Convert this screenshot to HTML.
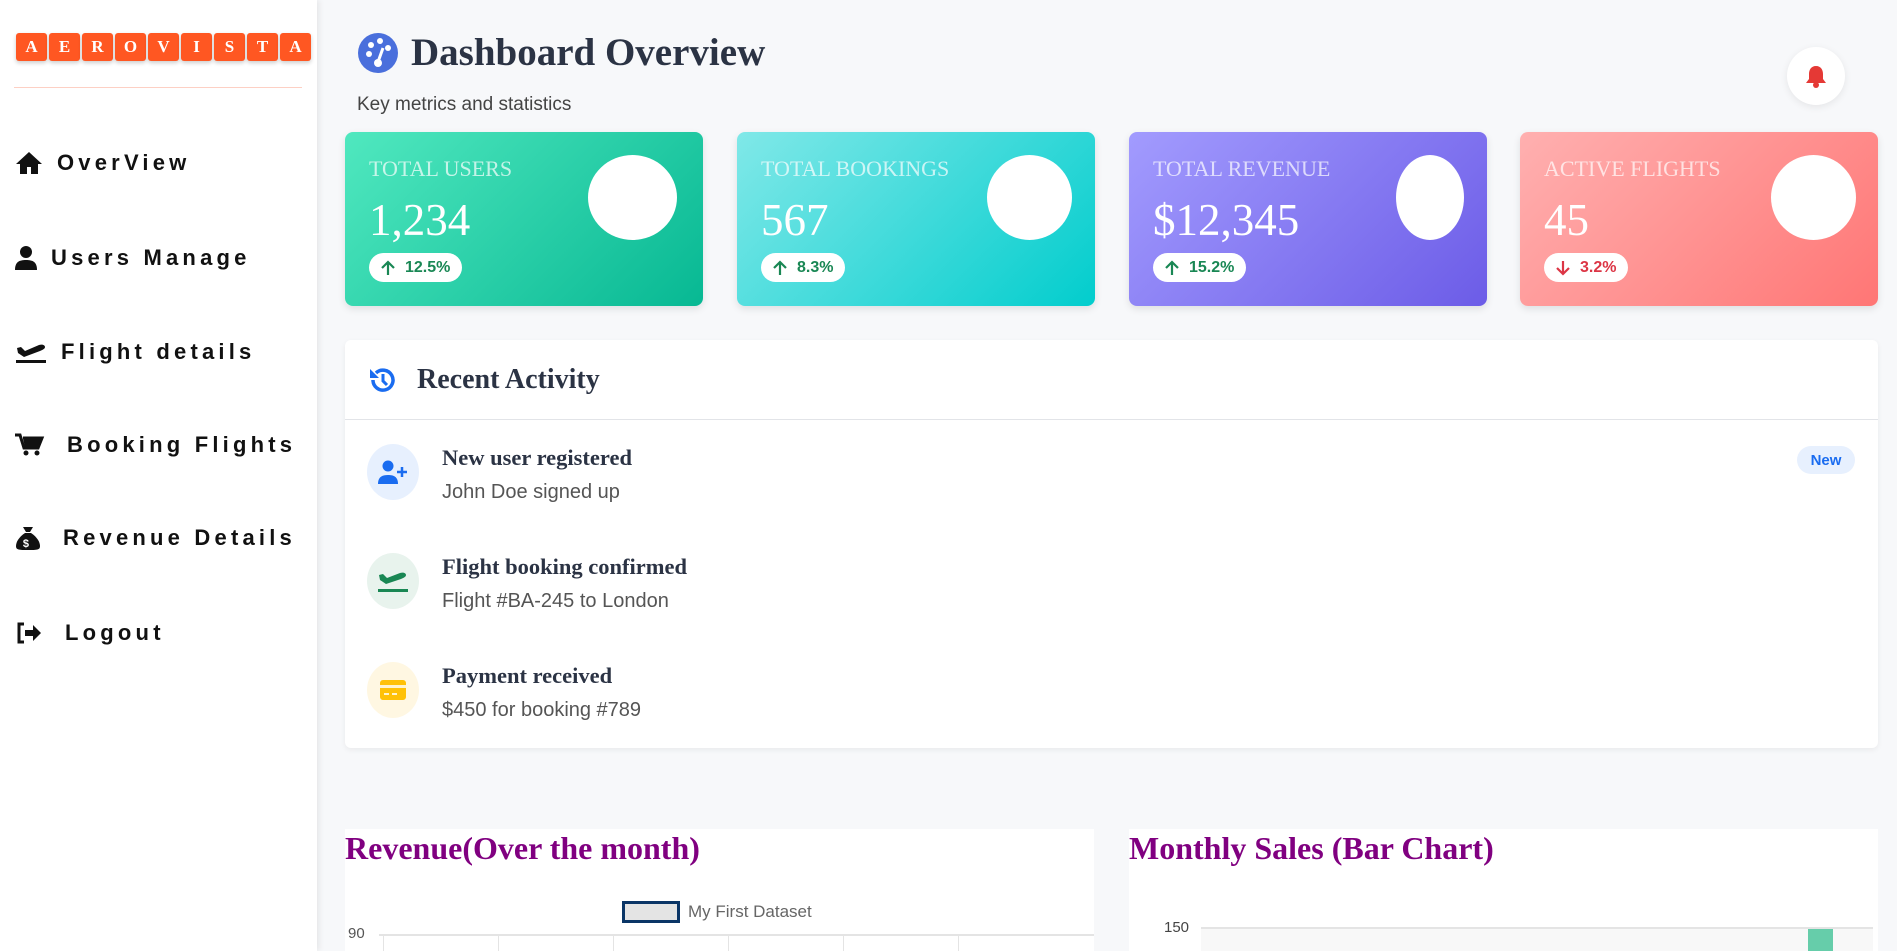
<!DOCTYPE html>
<html><head><meta charset="utf-8"><style>
*{box-sizing:border-box;margin:0;padding:0}
html{overflow:hidden;height:951px}
body{width:1897px;height:951px;overflow:hidden;background:#f7f8fa;font-family:"Liberation Sans",sans-serif;position:relative}
.side{position:absolute;left:0;top:0;width:317px;height:951px;background:#fff;box-shadow:2px 0 6px rgba(0,0,0,.08)}
.logo{position:absolute;left:16px;top:33px;display:flex;gap:2px}
.logo span{width:31px;height:28px;background:#ff5722;color:#fff;font-family:"Liberation Serif",serif;font-weight:bold;font-size:17px;display:flex;align-items:center;justify-content:center;border-radius:3px;box-shadow:0 2px 4px rgba(0,0,0,.2)}
.div{position:absolute;left:14px;top:87px;width:288px;height:1px;background:#fdd0c4}
.nav{position:absolute;left:15px;display:flex;align-items:center;font-weight:bold;font-size:22px;letter-spacing:4.2px;color:#111}
.nav svg{margin-right:14px}
.main{position:absolute;left:317px;top:0;right:0;height:951px}
.h1{position:absolute;left:40px;top:30px;display:flex;align-items:center;font-family:"Liberation Serif",serif;font-weight:bold;font-size:39px;color:#2b3344}
.sub{position:absolute;left:40px;top:94px;font-size:19px;color:#444}
.bell{position:absolute;left:1470px;top:47px;width:58px;height:58px;border-radius:50%;background:#fff;box-shadow:0 2px 8px rgba(0,0,0,.08);display:flex;align-items:center;justify-content:center}
.card{position:absolute;top:132px;width:358px;height:174px;border-radius:8px;color:#fff;box-shadow:0 3px 8px rgba(0,0,0,.1)}
.card .l{position:absolute;left:24px;top:24px;font-family:"Liberation Serif",serif;font-size:22px;opacity:.7}
.card .v{position:absolute;left:24px;top:62px;font-family:"Liberation Serif",serif;font-size:45px}
.card .b{position:absolute;left:24px;top:121px;height:29px;padding:0 12px;background:#fff;border-radius:15px;font-size:16px;font-weight:bold;display:flex;align-items:center;gap:10px}
.card .c{position:absolute;background:#fff;border-radius:50%}
.ra{position:absolute;left:28px;top:340px;width:1533px;height:408px;background:#fff;border-radius:6px;box-shadow:0 2px 6px rgba(0,0,0,.06)}
.ra .hd{height:80px;border-bottom:1px solid #e2e4e8;display:flex;align-items:center;padding-left:22px;font-family:"Liberation Serif",serif;font-weight:bold;font-size:28px;color:#2b3344}
.it{position:absolute;left:22px}
.it .ic{position:absolute;left:0;top:0;width:52px;height:56px;border-radius:50%;display:flex;align-items:center;justify-content:center}
.it .t{position:absolute;left:75px;top:1px;white-space:nowrap;font-family:"Liberation Serif",serif;font-weight:bold;font-size:22.5px;color:#2b3344}
.it .s{position:absolute;left:75px;top:37px;white-space:nowrap;font-size:20px;color:#555}
.ch{position:absolute;top:829px;width:749px;height:122px;background:#fff;overflow:hidden}
.ch h2{font-family:"Liberation Serif",serif;font-weight:bold;font-size:32px;color:#800080;line-height:38px}
</style></head><body>
<div class="side">
<div class="logo"><span>A</span><span>E</span><span>R</span><span>O</span><span>V</span><span>I</span><span>S</span><span>T</span><span>A</span></div>
<div class="div"></div>
<div class="nav" style="top:150px"><svg width="28" height="24" viewBox="0 0 28 24"><path d="M14 1L1 13h4v10h7v-7h4v7h7V13h4z" fill="#111"/></svg>OverView</div>
<div class="nav" style="top:245px"><svg width="22" height="24" viewBox="0 0 22 24"><circle cx="11" cy="6" r="6" fill="#111"/><path d="M0 24c0-8 4-10 11-10s11 2 11 10z" fill="#111"/></svg>Users Manage</div>
<div class="nav" style="top:339px"><svg width="32" height="24" viewBox="0 0 32 24"><path d="M2 8l4-1 4 4 14-6c3-1 6 0 6 2s-3 3-5 4L9 17 3 13z" fill="#111"/><rect x="1" y="20" width="30" height="3" fill="#111"/></svg>Flight details</div>
<div class="nav" style="top:432px"><svg width="30" height="24" viewBox="0 0 30 24" style="margin-right:22px"><path d="M0 2h5l4 13h14l4-10H8" fill="none" stroke="#111" stroke-width="3"/><path d="M8 5h19l-4 10H10z" fill="#111"/><circle cx="11" cy="20" r="2.5" fill="#111"/><circle cx="22" cy="20" r="2.5" fill="#111"/></svg>Booking Flights</div>
<div class="nav" style="top:525px"><svg width="26" height="26" viewBox="0 0 26 26" style="margin-right:22px"><path d="M8 2h10l-3 5h-4z" fill="#111"/><path d="M10 8h6c6 4 9 9 9 13s-3 4-12 4S1 25 1 21s3-9 9-13z" fill="#111"/><text x="13" y="22" font-size="11" fill="#fff" text-anchor="middle" font-weight="bold">$</text></svg>Revenue Details</div>
<div class="nav" style="top:620px"><svg width="28" height="24" viewBox="0 0 28 24" style="margin-right:22px"><path d="M9 3H4v18h5" fill="none" stroke="#111" stroke-width="3"/><path d="M10 9h8V4l8 8-8 8v-5h-8z" fill="#111"/></svg>Logout</div>
</div>
<div class="main">
<div class="h1"><svg width="42" height="42" viewBox="0 0 42 42" style="margin-right:12px"><circle cx="21" cy="21" r="20" fill="#4a6fdc"/><circle cx="12" cy="22" r="3" fill="#fff"/><circle cx="14" cy="13" r="3" fill="#fff"/><circle cx="23" cy="9" r="3" fill="#fff"/><circle cx="31" cy="16" r="3" fill="#fff"/><path d="M21 30l5-14" stroke="#fff" stroke-width="3"/><circle cx="21" cy="31" r="4" fill="#fff"/></svg>Dashboard Overview</div>
<div class="sub">Key metrics and statistics</div>
<div class="bell"><svg width="22" height="24" viewBox="0 0 22 24"><path d="M11 2c5 0 7 4 7 8v5l3 4H1l3-4v-5c0-4 2-8 7-8z" fill="#e53935"/><circle cx="11" cy="21" r="3" fill="#e53935"/></svg></div>
<div class="card" style="left:28px;background:linear-gradient(135deg,#50e8bf,#07b893)"><div class="l">TOTAL USERS</div><div class="v">1,234</div><div class="b" style="color:#198754"><svg width="14" height="16" viewBox="0 0 14 16"><path d="M7 15V2M1 8l6-6 6 6" fill="none" stroke="#198754" stroke-width="2.2"/></svg>12.5%</div><div class="c" style="left:243px;top:23px;width:89px;height:85px"></div></div>
<div class="card" style="left:420px;background:linear-gradient(135deg,#80e8e8,#02cdcd)"><div class="l">TOTAL BOOKINGS</div><div class="v">567</div><div class="b" style="color:#198754"><svg width="14" height="16" viewBox="0 0 14 16"><path d="M7 15V2M1 8l6-6 6 6" fill="none" stroke="#198754" stroke-width="2.2"/></svg>8.3%</div><div class="c" style="left:250px;top:23px;width:85px;height:85px"></div></div>
<div class="card" style="left:812px;background:linear-gradient(135deg,#a29bfe,#6c5ce7)"><div class="l">TOTAL REVENUE</div><div class="v">$12,345</div><div class="b" style="color:#198754"><svg width="14" height="16" viewBox="0 0 14 16"><path d="M7 15V2M1 8l6-6 6 6" fill="none" stroke="#198754" stroke-width="2.2"/></svg>15.2%</div><div class="c" style="left:267px;top:23px;width:68px;height:85px"></div></div>
<div class="card" style="left:1203px;background:linear-gradient(135deg,#ffb0b0,#ff7675)"><div class="l">ACTIVE FLIGHTS</div><div class="v">45</div><div class="b" style="color:#dc3545"><svg width="14" height="16" viewBox="0 0 14 16"><path d="M7 1v13M1 8l6 6 6-6" fill="none" stroke="#dc3545" stroke-width="2.2"/></svg>3.2%</div><div class="c" style="left:251px;top:23px;width:85px;height:85px"></div></div>
<div class="ra"><div class="hd"><svg width="30" height="30" viewBox="0 0 30 30" style="margin-right:20px"><path d="M6 15a10 10 0 1 0 3-7" fill="none" stroke="#1a6cf0" stroke-width="3.5"/><path d="M3 4v9h9z" fill="#1a6cf0"/><path d="M16 9v7l4 4" fill="none" stroke="#1a6cf0" stroke-width="3"/></svg>Recent Activity</div>
<div class="it" style="top:104px"><div class="ic" style="background:#e7f0fe"><svg width="30" height="24" viewBox="0 0 30 24"><circle cx="10" cy="6" r="5.5" fill="#1a6cf0"/><path d="M0 24c0-7 4-9 10-9s10 2 10 9z" fill="#1a6cf0"/><path d="M24 7v10M19 12h10" stroke="#1a6cf0" stroke-width="2.5"/></svg></div><div class="t">New user registered</div><div class="s">John Doe signed up</div></div>
<div class="it" style="top:213px"><div class="ic" style="background:#e8f3ed"><svg width="30" height="24" viewBox="0 0 30 24"><path d="M1 6l4-1 4 4 13-5c3-1 6 0 6 2s-3 3-5 4L8 15 2 11z" fill="#198754"/><rect x="0" y="20" width="30" height="3" fill="#198754"/></svg></div><div class="t">Flight booking confirmed</div><div class="s">Flight #BA-245 to London</div></div>
<div class="it" style="top:322px"><div class="ic" style="background:#fff7e2"><svg width="28" height="22" viewBox="0 0 28 22"><rect x="1" y="1" width="26" height="20" rx="3" fill="#ffc107"/><rect x="1" y="6" width="26" height="3" fill="#fff3cd"/><path d="M5 15h5M13 15h5" stroke="#fff3cd" stroke-width="2"/></svg></div><div class="t">Payment received</div><div class="s">$450 for booking #789</div></div>
<div style="position:absolute;left:1452px;top:106px;width:58px;height:28px;border-radius:14px;background:#e7f0fe;color:#1a6cf0;font-size:15px;font-weight:bold;display:flex;align-items:center;justify-content:center">New</div>
</div>
<div class="ch" style="left:28px"><h2>Revenue(Over the month)</h2>
<div style="position:absolute;left:277px;top:72px;width:58px;height:22px;border:3px solid #0a3566;background:#e4e4e4"></div>
<div style="position:absolute;left:343px;top:73px;font-size:17px;color:#666">My First Dataset</div>
<div style="position:absolute;left:3px;top:96px;font-size:15px;color:#555">90</div>
<div style="position:absolute;left:34px;top:105px;width:717px;height:2px;background:#e4e4e4"></div>
<div style="position:absolute;left:38px;top:105px;width:680px;height:40px;background:repeating-linear-gradient(90deg,#e4e4e4 0 1px,transparent 1px 115px)"></div>
</div>
<div class="ch" style="left:812px"><h2>Monthly Sales (Bar Chart)</h2>
<div style="position:absolute;left:35px;top:90px;font-size:15px;color:#444">150</div>
<div style="position:absolute;left:72px;top:98px;width:672px;height:2px;background:#e4e4e4"></div>
<div style="position:absolute;left:72px;top:100px;width:672px;height:40px;background:#f8f8f8"></div>
<div style="position:absolute;left:679px;top:100px;width:25px;height:40px;background:#66cdaa"></div>
</div>
</div>
</body></html>
